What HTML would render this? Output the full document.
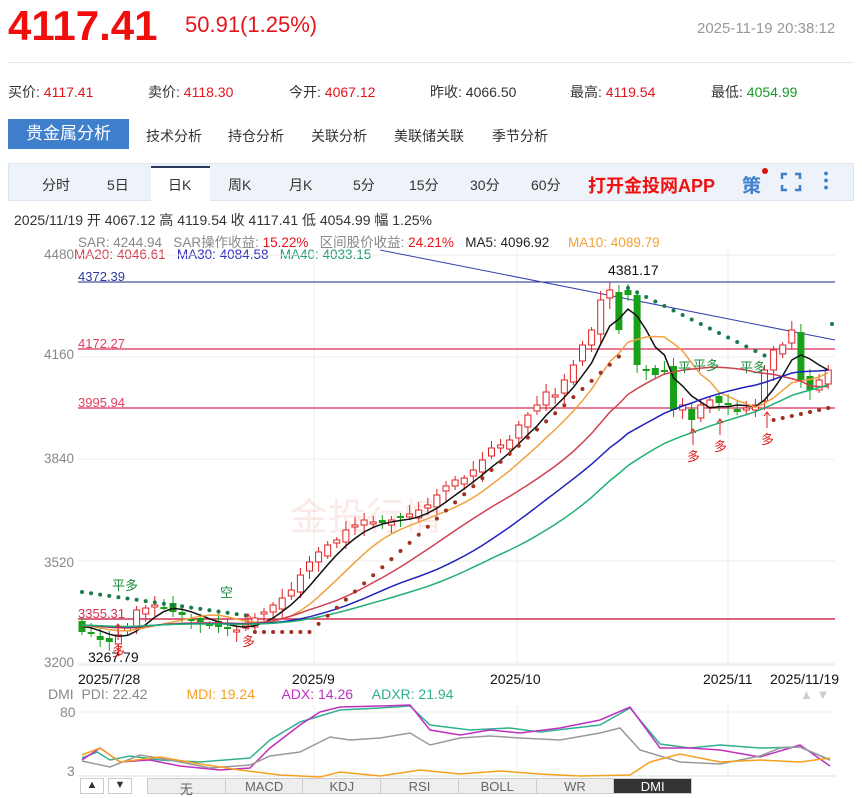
<!DOCTYPE html>
<html><head><meta charset="utf-8"><style>
*{margin:0;padding:0;box-sizing:border-box}
body{width:862px;height:794px;overflow:hidden;background:#fff;font-family:"Liberation Sans","Noto Sans CJK SC",sans-serif;position:relative;color:#333}
.a{position:absolute;white-space:nowrap}
.r{color:#e4141b}.g{color:#1a9a2a}
</style></head><body>
<div class="a" style="left:8px;top:2px;font-size:42px;font-weight:bold;color:#f20d0d">4117.41</div>
<div class="a r" style="left:185px;top:12px;font-size:22px">50.91(1.25%)</div>
<div class="a" style="left:697px;top:20px;font-size:15px;color:#999">2025-11-19 20:38:12</div>
<div class="a" style="left:8px;top:62px;width:846px;border-top:1px solid #e8e8e8"></div>
<div class="a" style="left:8px;top:82px;font-size:14px">买价: <span class="r">4117.41</span></div>
<div class="a" style="left:148px;top:82px;font-size:14px">卖价: <span class="r">4118.30</span></div>
<div class="a" style="left:289px;top:82px;font-size:14px">今开: <span class="r">4067.12</span></div>
<div class="a" style="left:430px;top:82px;font-size:14px">昨收: 4066.50</div>
<div class="a" style="left:570px;top:82px;font-size:14px">最高: <span class="r">4119.54</span></div>
<div class="a" style="left:711px;top:82px;font-size:14px">最低: <span class="g">4054.99</span></div>
<div class="a" style="left:8px;top:119px;width:121px;height:30px;background:#3f7fcc;color:#fff;font-size:17px;line-height:30px;text-align:center">贵金属分析</div>
<div class="a" style="left:146px;top:126px;font-size:14px">技术分析</div>
<div class="a" style="left:228px;top:126px;font-size:14px">持仓分析</div>
<div class="a" style="left:311px;top:126px;font-size:14px">关联分析</div>
<div class="a" style="left:394px;top:126px;font-size:14px">美联储关联</div>
<div class="a" style="left:492px;top:126px;font-size:14px">季节分析</div>
<div class="a" style="left:8px;top:163px;width:846px;height:38px;background:#eef3fa;border:1px solid #dde6f0"></div>
<div class="a" style="left:151px;top:166px;width:59px;height:35px;background:#fff;border-top:2px solid #2a3a5a"></div>
<div class="a" style="left:42px;top:175px;font-size:14px">分时</div>
<div class="a" style="left:107px;top:175px;font-size:14px">5日</div>
<div class="a" style="left:168px;top:175px;font-size:14px">日K</div>
<div class="a" style="left:228px;top:175px;font-size:14px">周K</div>
<div class="a" style="left:289px;top:175px;font-size:14px">月K</div>
<div class="a" style="left:353px;top:175px;font-size:14px">5分</div>
<div class="a" style="left:409px;top:175px;font-size:14px">15分</div>
<div class="a" style="left:470px;top:175px;font-size:14px">30分</div>
<div class="a" style="left:531px;top:175px;font-size:14px">60分</div>
<div class="a" style="left:588px;top:172px;font-size:18px;font-weight:bold;color:#f01010">打开金投网APP</div>
<div class="a" style="left:742px;top:171px;font-size:19px;font-weight:bold;color:#3f7fcc">策</div>
<div class="a" style="left:762px;top:168px;width:6px;height:6px;border-radius:3px;background:#e01010"></div>
<svg class="a" style="left:780px;top:172px" width="22" height="20"><path d="M2 7V2h5M15 2h5v5M20 13v5h-5M7 18H2v-5" fill="none" stroke="#3f7fcc" stroke-width="2.5"/></svg>
<div class="a" style="left:824px;top:170px;width:4px;height:20px;background:radial-gradient(circle,#3f7fcc 1.8px,transparent 2px) 0 0/4px 7px"></div>
<div class="a" style="left:14px;top:210px;font-size:14px">2025/11/19 开 4067.12 高 4119.54 收 4117.41 低 4054.99 幅 1.25%</div>
<div class="a" style="left:78px;top:231px;font-size:13.5px;color:#888">SAR: 4244.94 &nbsp; SAR操作收益: <span class="r">15.22%</span> &nbsp; 区间股价收益: <span class="r">24.21%</span> &nbsp; <span style="color:#222">MA5: 4096.92</span> &nbsp; &nbsp; <span style="color:#f5a030">MA10: 4089.79</span></div>
<div class="a" style="left:44px;top:247px;font-size:13.5px;color:#888">4480<span style="color:#d04050">MA20: 4046.61</span> &nbsp; <span style="color:#3030c0">MA30: 4084.58</span> &nbsp; <span style="color:#20a070">MA40: 4033.15</span></div>
<div class="a" style="left:44px;top:347px;font-size:13.5px;color:#888">4160</div>
<div class="a" style="left:44px;top:451px;font-size:13.5px;color:#888">3840</div>
<div class="a" style="left:44px;top:555px;font-size:13.5px;color:#888">3520</div>
<div class="a" style="left:44px;top:655px;font-size:13.5px;color:#888">3200</div>
<svg id="ch" class="a" style="left:0;top:0" width="862" height="794"></svg>
<div class="a" style="left:78px;top:671px;font-size:14px;color:#111">2025/7/28</div>
<div class="a" style="left:292px;top:671px;font-size:14px;color:#111">2025/9</div>
<div class="a" style="left:490px;top:671px;font-size:14px;color:#111">2025/10</div>
<div class="a" style="left:703px;top:671px;font-size:14px;color:#111">2025/11</div>
<div class="a" style="left:770px;top:671px;font-size:14px;color:#111">2025/11/19</div>
<div class="a" style="left:48px;top:686px;font-size:14px;color:#888">DMI &nbsp;PDI: 22.42 &nbsp; &nbsp; &nbsp; &nbsp; &nbsp;<span style="color:#f5a020">MDI: 19.24</span> &nbsp; &nbsp; &nbsp; <span style="color:#c030c0">ADX: 14.26</span> &nbsp; &nbsp; <span style="color:#30b090">ADXR: 21.94</span></div>
<div class="a" style="left:800px;top:687px;font-size:13px;color:#ccc">▲ ▼</div>
<div class="a" style="left:60px;top:704px;font-size:14px;color:#888">80</div>
<div class="a" style="left:67px;top:763px;font-size:14px;color:#888">3</div>
<div class="a" style="left:80px;top:778px;width:24px;height:16px;border:1px solid #ccc;font-size:11px;text-align:center">▲</div>
<div class="a" style="left:108px;top:778px;width:24px;height:16px;border:1px solid #ccc;font-size:11px;text-align:center">▼</div>
<div class="a" style="left:147px;top:778px;width:545px;height:16px;background:#eee;border:1px solid #ccc;font-size:13px;color:#666;display:flex">
<span style="width:78px;text-align:center;border-right:1px solid #ccc">无</span><span style="width:78px;text-align:center;border-right:1px solid #ccc">MACD</span><span style="width:78px;text-align:center;border-right:1px solid #ccc">KDJ</span><span style="width:78px;text-align:center;border-right:1px solid #ccc">RSI</span><span style="width:78px;text-align:center;border-right:1px solid #ccc">BOLL</span><span style="width:78px;text-align:center;border-right:1px solid #ccc">WR</span><span style="width:77px;text-align:center;background:#333;color:#fff">DMI</span></div>
<script>
(function(){
var s=document.getElementById('ch'),h='';
function L(x1,y1,x2,y2,cc,w){h+='<line x1="'+x1+'" y1="'+y1+'" x2="'+x2+'" y2="'+y2+'" stroke="'+cc+'" stroke-width="'+(w||1)+'"/>';}
function T(x,y,t,cc,sz){h+='<text x="'+x+'" y="'+y+'" fill="'+cc+'" font-size="'+(sz||14)+'" font-family="Liberation Sans,Noto Sans CJK SC,sans-serif">'+t+'</text>';}
[255,357,459,561,663].forEach(function(y){L(78,y,835,y,'#eee')});
[314,517,728].forEach(function(x){L(x,250,x,665,'#eee');L(x,705,x,776,'#eee')});
L(78,712,835,712,'#eee');L(78,776,835,776,'#ddd');L(78,665,835,665,'#ddd');
T(290,530,'金投行情','rgba(230,120,100,0.15)',38);
L(78,282,835,282,'#1a2a8a');L(78,349,835,349,'#e05070',1.5);L(78,408,835,408,'#e05070',1.5);L(78,619,835,619,'#d03050',1.5);
T(78,281,'4372.39','#2a3aa0',13);T(78,348,'4172.27','#e04060',13);T(78,407,'3995.94','#e04060',13);T(78,618,'3355.31','#d03050',13);
L(380,250,835,340,'#3040b0');
var c=[632,632,640,642,635,628,610,608,605,607,612,615,620,622,625,627,628,630,625,618,612,605,598,590,575,562,552,545,540,530,525,520,522,523,520,517,514,510,505,495,486,480,478,470,460,448,445,440,425,415,405,392,395,380,365,345,330,300,290,330,295,365,370,375,370,410,405,420,405,400,403,405,412,408,405,370,350,345,330,380,390,380,370];
var n=c.length,prev=625;
for(var i=0;i<n;i++){var x=82+i*9.1,o=prev+((i*7)%5-2)*2,cl=c[i];if(i==60){o=290}if(i==64)o=370;var up=cl<o;var col=up?'#e02020':'#18a018';
var tp=Math.min(o,cl)-3-(i*13%7),bt=Math.max(o,cl)+3+(i*11%9);L(x,tp,x,bt,col);
var hh=Math.max(Math.abs(o-cl),2);if(up)h+='<rect x="'+(x-3)+'" y="'+Math.min(o,cl)+'" width="6" height="'+hh+'" fill="#fff" stroke="#e02020"/>';else h+='<rect x="'+(x-3.5)+'" y="'+Math.min(o,cl)+'" width="7" height="'+hh+'" fill="#18a018"/>';prev=cl;}
function ma(p,col){var pts=[];for(var i=0;i<n;i++){var a=0,k=0;for(var j=Math.max(0,i-p+1);j<=i;j++){a+=c[j];k++}var v=a/k;if(k<p)v=(v*k+625*(p-k))/p;pts.push((82+i*9.1).toFixed(1)+','+v.toFixed(1));}h+='<polyline points="'+pts.join(' ')+'" fill="none" stroke="'+col+'" stroke-width="1.5"/>';}
ma(5,'#111');ma(10,'#f0a040');ma(20,'#d04050');ma(30,'#2020c0');ma(40,'#20b070');
for(var i=0;i<n;i++){var x=82+i*9.1,y,col;
if(i<19){y=592+i*1.3;col='#1a7a4a'}
else if(i<60){y=632-Math.max(0,i-25)*8.1;col='#a03020'}
else if(i<76){y=288+(i-60)*4.5;col='#1a7a4a'}else{y=420-(i-76)*2;col='#a03020'}
h+='<circle cx="'+x+'" cy="'+y+'" r="2" fill="'+col+'"/>';}
h+='<circle cx="832" cy="324" r="2" fill="#1a7a4a"/>';
T(608,275,'4381.17','#111',14);T(88,662,'3267.79','#111',14);
T(112,590,'平多','#1a8a3a',13);T(220,597,'空','#1a8a3a',13);T(678,372,'平','#1a8a3a',13);T(693,370,'平多','#1a8a3a',13);T(740,372,'平多','#1a8a3a',13);
[[118,640],[248,630],[693,445],[720,435],[767,428]].forEach(function(p){L(p[0],p[1],p[0],p[1]-16,'#e02020');h+='<path d="M'+(p[0]-3)+' '+(p[1]-12)+'L'+p[0]+' '+(p[1]-16)+'L'+(p[0]+3)+' '+(p[1]-12)+'" fill="none" stroke="#e02020"/>';T(p[0]-6,p[1]+16,'多','#e02020',13);});
function P(pts,col){h+='<polyline points="'+pts+'" fill="none" stroke="'+col+'" stroke-width="1.5"/>';}
P('82,758 97,752 110,760 130,756 160,760 200,762 250,758 270,740 300,722 320,716 340,710 380,708 410,706 430,725 470,730 510,728 540,732 600,725 630,708 660,744 690,748 720,745 760,748 800,747 830,760','#30b090');
P('82,760 100,748 120,762 150,760 180,766 220,770 250,768 270,748 300,725 320,712 340,707 380,706 410,705 430,730 460,735 490,730 520,733 560,728 600,720 630,707 660,748 690,748 720,750 760,757 800,745 830,766','#c030c0');
P('82,761 110,767 140,755 170,760 210,768 250,765 270,756 300,752 330,737 350,740 380,738 410,733 430,745 460,738 490,736 520,738 560,740 600,733 620,728 640,750 680,762 720,764 760,756 780,748 800,747 830,760','#999');
P('82,755 100,748 120,762 160,757 200,764 240,770 280,775 320,777 340,772 380,776 420,770 460,774 500,771 540,774 580,776 630,775 650,762 680,754 720,762 760,760 800,762 830,758','#f5a020');
s.innerHTML=h;
})();
</script>
</body></html>
